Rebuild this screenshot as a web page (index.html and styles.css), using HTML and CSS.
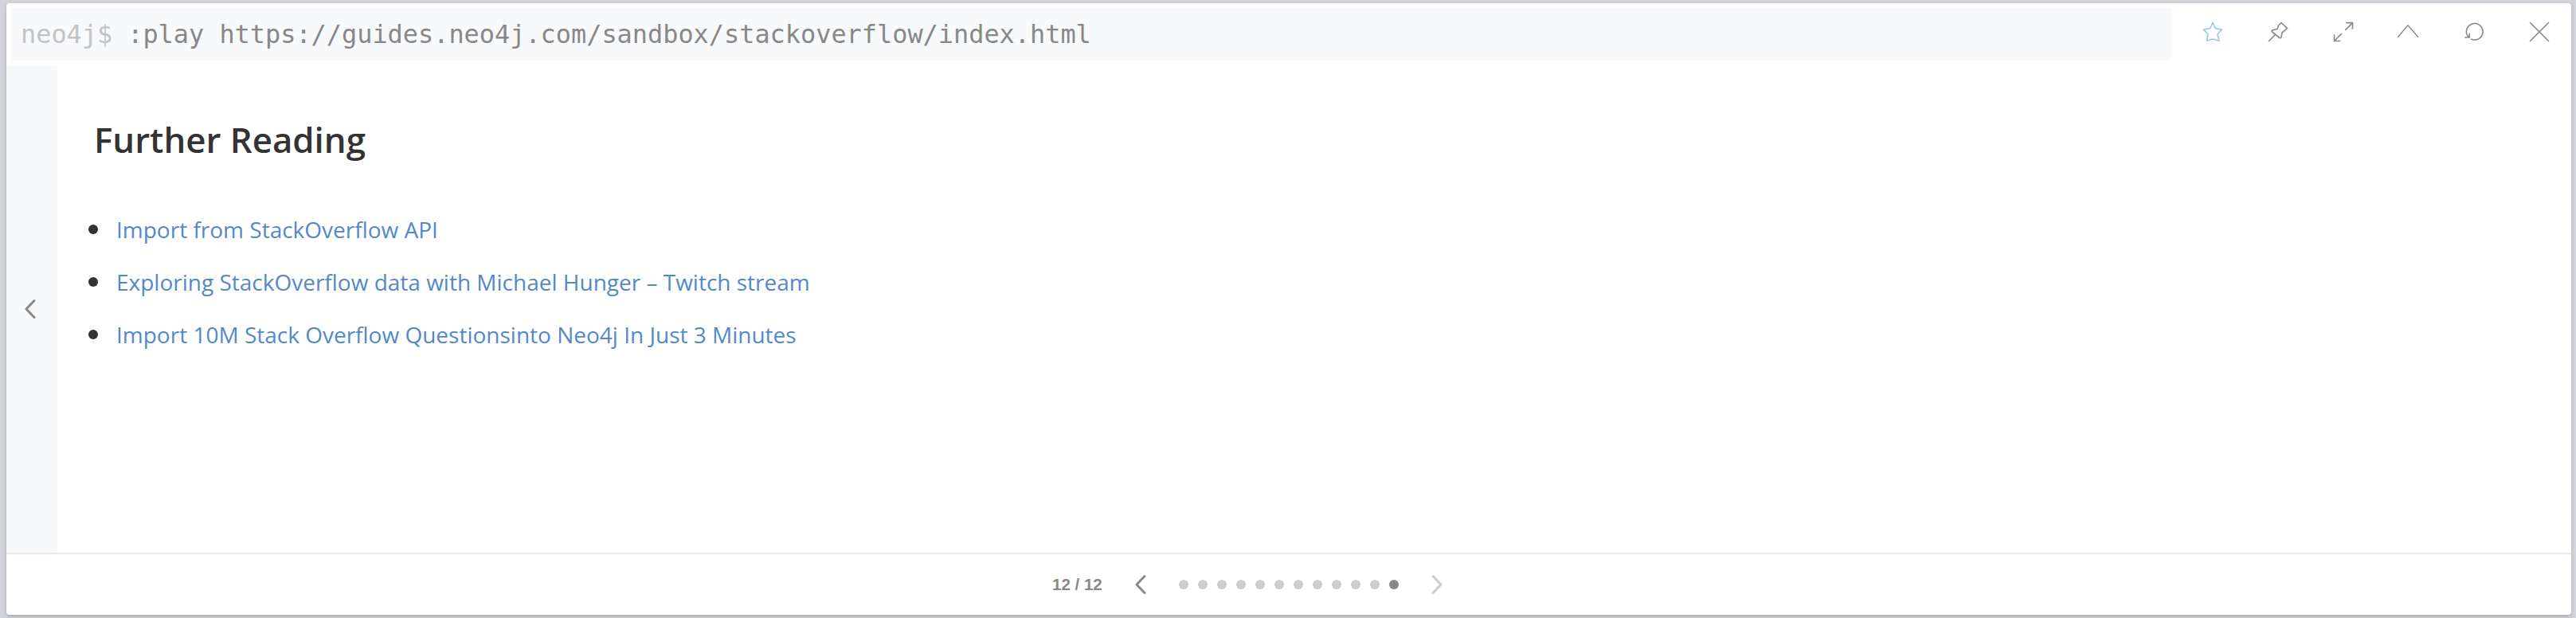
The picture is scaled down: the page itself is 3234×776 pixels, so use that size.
FILE: index.html
```html
<!DOCTYPE html>
<html lang="en">
<head>
<meta charset="utf-8">
<title>Neo4j Browser</title>
<link rel="stylesheet" href="styles.css">
</head>
<body>
<article class="frame">
  <header class="titlebar">
    <div class="command"><span class="prompt">neo4j$</span><span class="cmd">:play https://guides.neo4j.com/sandbox/stackoverflow/index.html</span></div>
    <div class="actions">
      <svg class="icon star" viewBox="0 0 28 28"><path d="M14 2.500L17.400 9.700 25.500 11.200 20 17 22 25.300 14 23 6.500 25.300 8 17 2.500 11.200 10.500 9.700z"/></svg>
      <svg class="icon" viewBox="0 0 28 28"><path d="M2.500 25.500l8-8.200M18 2.500l7.500 7.200L19 15l-1 5.500q-.6 1.600-2.200 1L6.500 14q-.8-1.500.5-2.200l6-1.300L14.500 6z"/></svg>
      <svg class="icon" viewBox="0 0 28 28"><path d="M18 2.700h7.500V10M25.500 2.700l-8.800 8.600M9.700 25.500H2.500V18M2.500 25.500l8.800-8.800"/></svg>
      <svg class="icon thin" viewBox="0 0 28 28"><path d="M.7 20.300L13 5.800l12.500 14.500"/></svg>
      <svg class="icon" viewBox="0 0 28 28"><path d="M10.600 23.200a10.300 10.300 0 1 0-4.400-3.700L7.800 21M2.700 21h5.500v-4.500"/></svg>
      <svg class="icon" viewBox="0 0 28 28"><path d="M2.500 2.500l23 23M25.500 2.500l-23 23"/></svg>
    </div>
  </header>
  <main class="body">
    <button class="side" aria-label="Previous slide"><svg class="chev" viewBox="0 0 16 26"><path d="M13 2.500L3 13l10 10.500"/></svg></button>
    <section class="slide">
      <h3 class="title">Further Reading</h3>
      <ul class="links">
        <li class="item"><a class="link">Import from StackOverflow API</a></li>
        <li class="item"><a class="link">Exploring StackOverflow data with Michael Hunger – Twitch stream</a></li>
        <li class="item"><a class="link">Import 10M Stack Overflow Questionsinto Neo4j In Just 3 Minutes</a></li>
      </ul>
    </section>
  </main>
  <footer class="pager">
    <span class="count">12 / 12</span>
    <svg class="chev" viewBox="0 0 16 26"><path d="M13 2.500L3 13l10 10.500"/></svg>
    <div class="dots">
      <i class="dot"></i><i class="dot"></i><i class="dot"></i><i class="dot"></i><i class="dot"></i><i class="dot"></i><i class="dot"></i><i class="dot"></i><i class="dot"></i><i class="dot"></i><i class="dot"></i><i class="dot current"></i>
    </div>
    <svg class="chev off" viewBox="0 0 16 26"><path d="M3 2.500L13 13 3 23.500"/></svg>
  </footer>
</article>
</body>
</html>
```
FILE: styles.css
```css
* { box-sizing: border-box; }
body {
  margin: 0;
  height: 776px;
  padding: 4px 6px 4px 8px;
  background: #d3d4da;
  font-family: "Open Sans", sans-serif;
  overflow: hidden;
}
.frame {
  display: flex;
  flex-direction: column;
  height: 768px;
  background: #fff;
  border-radius: 4px;
  box-shadow: 0 2px 4px rgba(0, 0, 0, .2);
}
.titlebar { display: flex; height: 78px; padding: 6px 0 6px 6px; }
.command {
  flex: none;
  width: 2712px;
  padding-left: 12px;
  display: flex;
  gap: 19px;
  align-items: center;
  background: #f8f9fb;
  border-radius: 4px;
  font: 31.9px/66px "DejaVu Sans Mono", monospace;
  white-space: pre;
}
.prompt { color: #c2c3c5; }
.cmd { color: #888; }
.actions { display: flex; gap: 54px; padding: 16px 0 0 38px; }
.icon {
  width: 28px;
  height: 28px;
  fill: none;
  stroke: #8c8c8c;
  stroke-width: 1.7;
  stroke-linejoin: round;
  stroke-linecap: round;
}
.star { stroke: #9dc9ee; }
.thin { stroke-width: 1.4; }
.body { display: flex; height: 612px; }
.side {
  display: flex;
  align-items: center;
  width: 64px;
  padding: 0 0 0 22px;
  border: 0;
  border-radius: 0 4px 4px 0;
  background: #f8f9fb;
}
.chev {
  width: 16px;
  height: 26px;
  fill: none;
  stroke: #888;
  stroke-width: 3;
  stroke-linecap: round;
  stroke-linejoin: round;
}
.off { stroke: #cdcdcd; }
.slide { padding: 63px 0 0 46px; color: #333; }
.title { margin: 0; font-size: 43.8px; line-height: 60px; font-weight: 600; }
.links { list-style: none; margin: 50px 0 0; padding: 0; }
.item { display: flex; align-items: center; height: 66px; margin-left: -7px; gap: 23px; font-size: 28px; }
.item::before { content: ""; width: 12px; height: 12px; border-radius: 50%; background: #333; }
.link { color: #5389c8; }
.pager {
  display: flex;
  align-items: center;
  height: 78px;
  padding-left: 1313px;
  border-top: 2px solid #e6e9ef;
}
.count { width: 103px; font: bold 20.5px "Liberation Sans", sans-serif; color: #888; white-space: pre; }
.dots { display: flex; gap: 12px; margin: 0 40px; }
.dot { width: 12px; height: 12px; border-radius: 50%; background: #cdcdcd; }
.current { background: #888; }
```
